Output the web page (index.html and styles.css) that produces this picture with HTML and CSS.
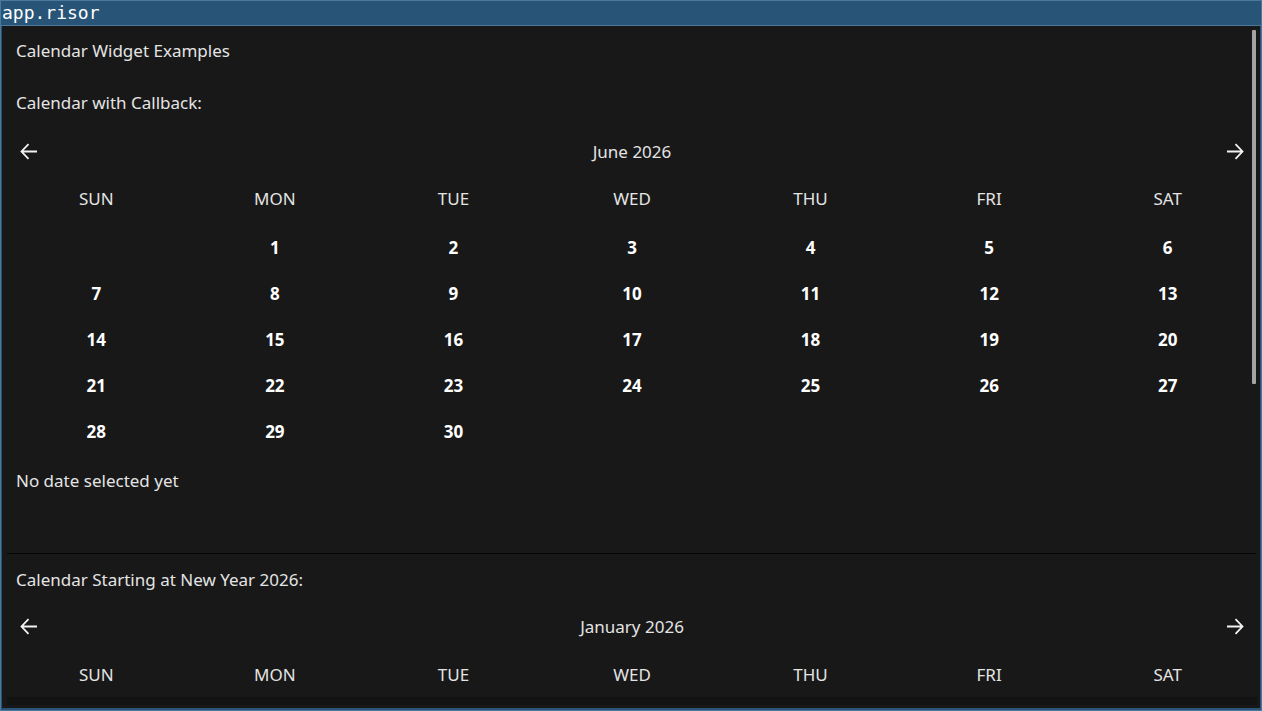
FILE: index.html
```html
<!DOCTYPE html>
<html>
<head>
<meta charset="utf-8">
<link rel="stylesheet" href="styles.css">
</head>
<body>
<div class="window">
  <div class="titlebar">app.risor</div>
  <div class="content">
    <div class="scroller">
      <div class="page-title">Calendar Widget Examples</div>
      <div class="label label-first">Calendar with Callback:</div>
      <div class="nav">
        <svg class="arrow" viewBox="0 0 18 17" width="18" height="17"><path d="M17 8.5H1.5M8.5 1.2L1.5 8.5L8.5 15.8" fill="none" stroke="#f2f2f2" stroke-width="1.8"/></svg>
        <span class="month">June 2026</span>
        <svg class="arrow" viewBox="0 0 18 17" width="18" height="17"><path d="M1 8.5H16.5M9.5 1.2L16.5 8.5L9.5 15.8" fill="none" stroke="#f2f2f2" stroke-width="1.8"/></svg>
      </div>
      <div class="grid heads">
        <span>SUN</span><span>MON</span><span>TUE</span><span>WED</span><span>THU</span><span>FRI</span><span>SAT</span>
      </div>
      <div class="grid days">
        <span></span><span>1</span><span>2</span><span>3</span><span>4</span><span>5</span><span>6</span>
        <span>7</span><span>8</span><span>9</span><span>10</span><span>11</span><span>12</span><span>13</span>
        <span>14</span><span>15</span><span>16</span><span>17</span><span>18</span><span>19</span><span>20</span>
        <span>21</span><span>22</span><span>23</span><span>24</span><span>25</span><span>26</span><span>27</span>
        <span>28</span><span>29</span><span>30</span><span></span><span></span><span></span><span></span>
      </div>
      <div class="label status">No date selected yet</div>
      <div class="separator"></div>
      <div class="label label-second">Calendar Starting at New Year 2026:</div>
      <div class="nav nav-second">
        <svg class="arrow" viewBox="0 0 18 17" width="18" height="17"><path d="M17 8.5H1.5M8.5 1.2L1.5 8.5L8.5 15.8" fill="none" stroke="#f2f2f2" stroke-width="1.8"/></svg>
        <span class="month">January 2026</span>
        <svg class="arrow" viewBox="0 0 18 17" width="18" height="17"><path d="M1 8.5H16.5M9.5 1.2L16.5 8.5L9.5 15.8" fill="none" stroke="#f2f2f2" stroke-width="1.8"/></svg>
      </div>
      <div class="grid heads heads-second">
        <span>SUN</span><span>MON</span><span>TUE</span><span>WED</span><span>THU</span><span>FRI</span><span>SAT</span>
      </div>
      <div class="next-band"></div>
    </div>
    <div class="scrollbar"></div>
  </div>
</div>
</body>
</html>
```

FILE: styles.css
```css
html, body {
  margin: 0;
  padding: 0;
  background: #285577;
}
.window {
  box-sizing: border-box;
  width: 1262px;
  height: 711px;
  border: 1px solid #4c7899;
  background: #285577;
  padding: 0 1px 2px 1px;
  display: flex;
  flex-direction: column;
}
.titlebar {
  height: 24px;
  border-bottom: 1px solid #4c7899;
  margin: 0 -1px;
  padding-left: 1px;
  font-family: "DejaVu Sans Mono", monospace;
  font-size: 18px;
  line-height: 24px;
  color: #ffffff;
}
.content {
  position: relative;
  flex: 1;
  background: #181818;
  overflow: hidden;
  padding-bottom: 3px;
  display: flex;
  flex-direction: column;
}
.scroller {
  flex: 1;
  overflow: hidden;
  margin: 0 3px 0 5px;
  font-family: "Noto Sans", sans-serif;
  font-size: 17px;
  color: #e4e4e4;
}
.page-title {
  height: 49px;
  display: flex;
  align-items: center;
  padding-left: 9px;
}
.label {
  display: flex;
  align-items: center;
  padding-left: 9px;
}
.label-first { height: 54px; }
.nav {
  height: 44px;
  display: flex;
  align-items: center;
  justify-content: space-between;
  padding: 0 13px 0 13px;
}
.arrow { display: block; }
.month { color: #e4e4e4; }
.grid {
  display: grid;
  grid-template-columns: repeat(7, 1fr);
}
.grid span {
  display: flex;
  align-items: center;
  justify-content: center;
}
.heads span { height: 50px; }
.days { margin-top: 1px; }
.days span {
  height: 46px;
  font-weight: bold;
  color: #ffffff;
}
.status { height: 53px; }
.separator {
  height: 1px;
  margin: 46px 1px 0 0;
  background: #050505;
}
.label-second { height: 51px; }
.nav-second { height: 42px; }
.heads-second span {
  height: 50px;
  padding-top: 4px;
  box-sizing: border-box;
}
.next-band {
  height: 20px;
  background: #131313;
}
.scrollbar {
  position: absolute;
  right: 4px;
  top: 4px;
  width: 4px;
  height: 354px;
  background: #a3a3a3;
  border-radius: 1px;
}
```
